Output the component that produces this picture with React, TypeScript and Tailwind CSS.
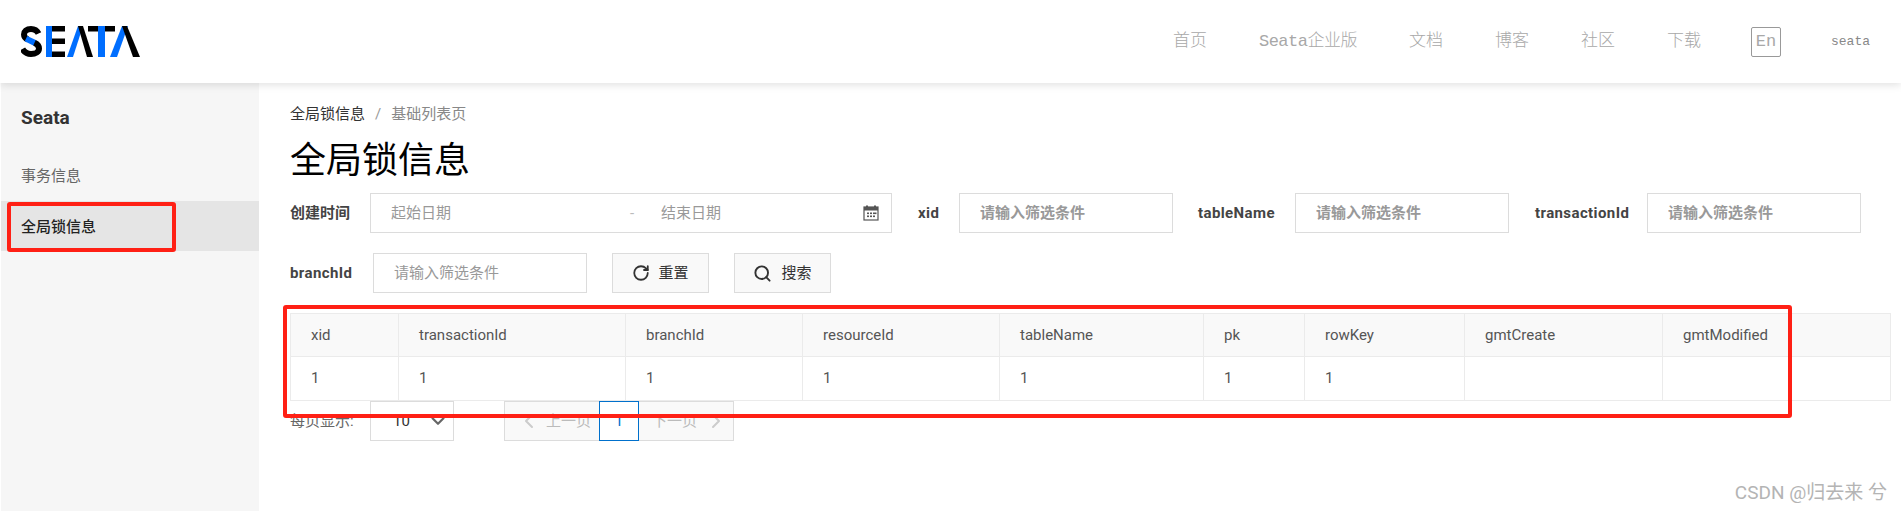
import { ChevronDown, ChevronLeft, ChevronRight, RotateCw, Search } from "lucide-react";

function Logo() {
  return (
    <svg width="120" height="31" viewBox="0 0 120 31" fill="none">
      <path d="M17.5 7.5C16 4.5 13 3 10 3C5.5 3 3 5.5 3 8.5C3 11 4.5 12.5 7 13.5" stroke="#000" strokeWidth="6" />
      <path d="M5 12.6L14 17" stroke="#006eff" strokeWidth="6" />
      <path d="M13.5 16.8C16.5 18.2 18 20 18 22.5C18 26 14.5 28 10 28C6.5 28 3.5 26.5 1.5 23" stroke="#000" strokeWidth="6" />
      <rect x="25" y="0" width="6" height="31" fill="#006eff" />
      <rect x="31" y="0" width="13" height="5.5" fill="#000" />
      <rect x="31" y="12.5" width="13" height="5.5" fill="#000" />
      <rect x="31" y="25.5" width="13" height="5.5" fill="#000" />
      <polygon points="46,31 52,31 62,0 57,0" fill="#006eff" />
      <polygon points="57,0 62,0 72,31 66,31" fill="#000" />
      <rect x="67" y="0" width="10" height="5.5" fill="#000" />
      <rect x="84" y="0" width="10" height="5.5" fill="#000" />
      <rect x="77" y="0" width="7" height="31" fill="#006eff" />
      <polygon points="89,31 96,31 107,0 101,0" fill="#006eff" />
      <polygon points="106,0 101,0 112,31 119,31" fill="#000" />
    </svg>
  );
}

function CalendarIcon() {
  return (
    <svg width="16" height="16" viewBox="0 0 16 16" className="shrink-0">
      <rect x="3" y="0.5" width="2" height="2.5" fill="#555" />
      <rect x="11" y="0.5" width="2" height="2.5" fill="#555" />
      <rect x="1" y="2" width="14" height="13" fill="none" stroke="#555" strokeWidth="1.2" />
      <rect x="1" y="2" width="14" height="3.5" fill="#555" />
      {[4, 7, 10].map((x) => (
        <g key={x} fill="#555">
          <rect x={x} y="7.5" width="2" height="1.6" />
          <rect x={x} y="10.5" width="2" height="1.6" />
        </g>
      ))}
      <rect x="12" y="7.5" width="1.5" height="1.6" fill="#555" />
    </svg>
  );
}

function TextInput() {
  return (
    <input
      placeholder="请输入筛选条件"
      className="w-[214px] h-[40px] border border-[#dcdcdc] pl-[20px] text-[15px] outline-none placeholder:text-[#999] bg-white"
    />
  );
}

const columns = ["xid", "transactionId", "branchId", "resourceId", "tableName", "pk", "rowKey", "gmtCreate", "gmtModified"];
const cells = ["1", "1", "1", "1", "1", "1", "1", "", ""];
const nav = ["首页", "文档", "博客", "社区", "下载"];

export default function App() {
  return (
    <div className="relative w-[1901px] h-[511px] overflow-hidden flex flex-col bg-white text-[15px] text-[#333] font-['Roboto','Noto_Sans_CJK_SC',sans-serif]">
      <header className="relative z-10 h-[83px] shrink-0 bg-white shadow-[0_2px_8px_rgba(0,0,0,0.12)] flex items-center pl-[21px] pr-[31px]">
        <Logo />
        <nav className="ml-auto flex items-center font-['Liberation_Mono','Noto_Sans_CJK_SC',monospace] font-light text-[#a8a8a8] text-[17px]">
          <span className="mr-[52px]">{nav[0]}</span>
          <span className="mr-[52px] tracking-[-0.5px]">Seata企业版</span>
          <span className="mr-[52px]">{nav[1]}</span>
          <span className="mr-[52px]">{nav[2]}</span>
          <span className="mr-[52px]">{nav[3]}</span>
          <span className="mr-[50px]">{nav[4]}</span>
          <span className="w-[30px] h-[30px] border border-[#999] rounded-[2px] flex items-center justify-center">En</span>
          <span className="ml-[50px] text-[13px] text-[#888]">seata</span>
        </nav>
      </header>

      <div className="flex flex-1 min-h-0">
        <aside className="w-[259px] shrink-0 bg-[#f6f6f6] border-l border-white">
          <div className="pl-[20px] pt-[23px] h-[66px] text-[19px] font-bold text-[#333] leading-[24px]">Seata</div>
          <div className="h-[52px] pl-[20px] pt-[2px] flex items-center text-[#666]">事务信息</div>
          <div className="h-[50px] pl-[20px] pt-[2px] flex items-center bg-[#e5e5e5] font-medium text-[#222]">全局锁信息</div>
        </aside>

        <main className="flex-1 min-w-0 pl-[31px] pr-[11px] pt-[21px]">
          <div className="h-[20px] leading-[20px] flex items-center">
            <span className="text-[#333]">全局锁信息</span>
            <span className="mx-[10px] text-[#999]">/</span>
            <span className="text-[#888]">基础列表页</span>
          </div>
          <h1 className="mt-[15px] text-[36px] leading-[44px] text-black font-normal">全局锁信息</h1>

          <div className="mt-[10px] h-[40px] flex items-center font-bold text-[#444]">
            <span className="w-[80px]">创建时间</span>
            <div className="w-[522px] h-[40px] border border-[#dcdcdc] flex items-center font-normal text-[#999] pl-[20px] pr-[12px]">
              <span className="w-[239px]">起始日期</span>
              <span className="w-[31px] text-[#bbb]">-</span>
              <span>结束日期</span>
              <span className="ml-auto"><CalendarIcon /></span>
            </div>
            <span className="ml-[26px] w-[41px] tracking-[0.4px]">xid</span>
            <TextInput />
            <span className="ml-[25px] w-[97px] tracking-[0.4px]">tableName</span>
            <TextInput />
            <span className="ml-[26px] w-[112px] tracking-[0.4px]">transactionId</span>
            <TextInput />
          </div>

          <div className="mt-[20px] h-[40px] flex items-center">
            <span className="w-[83px] font-bold text-[#444] tracking-[0.4px]">branchId</span>
            <TextInput />
            <button className="ml-[25px] w-[97px] h-[40px] border border-[#dcdcdc] bg-[#f9f9f9] flex items-center justify-center gap-[8px] text-[#333]">
              <RotateCw size={18} strokeWidth={2.4} />
              <span>重置</span>
            </button>
            <button className="ml-[25px] w-[97px] h-[40px] border border-[#dcdcdc] bg-[#f9f9f9] flex items-center justify-center gap-[9px] text-[#333]">
              <Search size={19} strokeWidth={2.4} />
              <span>搜索</span>
            </button>
          </div>

          <table className="mt-[20px] w-[1600px] table-fixed border-collapse text-[#555]">
            <colgroup>
              <col className="w-[108px]" />
              <col className="w-[227px]" />
              <col className="w-[177px]" />
              <col className="w-[197px]" />
              <col className="w-[204px]" />
              <col className="w-[101px]" />
              <col className="w-[160px]" />
              <col className="w-[198px]" />
              <col className="w-[228px]" />
            </colgroup>
            <thead>
              <tr className="h-[43px] bg-[#f9f9f9]">
                {columns.map((c) => (
                  <th key={c} className="border border-[#ebebeb] pl-[20px] text-left font-normal">{c}</th>
                ))}
              </tr>
            </thead>
            <tbody>
              <tr className="h-[44px]">
                {cells.map((c, i) => (
                  <td key={i} className="border border-[#ebebeb] pl-[20px]">{c}</td>
                ))}
              </tr>
            </tbody>
          </table>

          <div className="h-[40px] flex items-center">
            <span className="w-[80px] text-[#666]">每页显示:</span>
            <div className="w-[84px] h-[40px] border border-[#dcdcdc] flex items-center pl-[22px] pr-[4px] text-[#333]">
              <span>10</span>
              <ChevronDown size={22} strokeWidth={2.4} className="ml-auto text-[#666]" />
            </div>
            <div className="ml-[50px] w-[230px] h-[40px] border border-[#dcdcdc] bg-[#f9f9f9] flex items-center text-[#bbb]">
              <div className="w-[94px] flex items-center pl-[12px] gap-[5px]">
                <ChevronLeft size={24} className="text-[#ccc]" />
                <span>上一页</span>
              </div>
              <div className="w-[40px] h-[40px] border border-[#0070cc] bg-white flex items-center justify-center text-[#0070cc]">1</div>
              <div className="flex items-center pl-[13px] gap-[7px]">
                <span>下一页</span>
                <ChevronRight size={24} className="text-[#ccc]" />
              </div>
            </div>
          </div>
        </main>
      </div>

      <div className="absolute left-[7px] top-[202px] w-[169px] h-[50px] border-4 border-[#ff2015] rounded-[3px]" />
      <div className="absolute left-[283px] top-[305px] w-[1509px] h-[113px] border-4 border-[#ff2015] rounded-[3px]" />
      <div className="absolute right-[14px] top-[481px] text-[19px] leading-[24px] text-[#b4b4b4]">CSDN @归去来 兮</div>
    </div>
  );
}
